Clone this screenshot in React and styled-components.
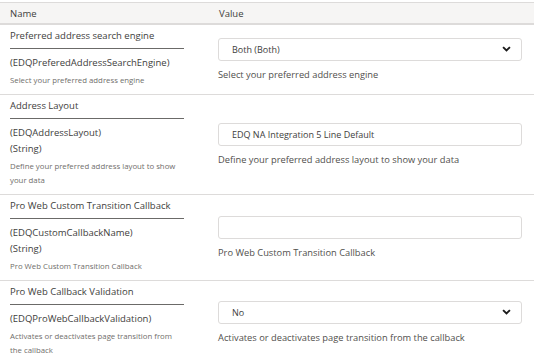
import React from "react";
import styled, { createGlobalStyle } from "styled-components";

const GlobalStyle = createGlobalStyle`
  body {
    margin: 0;
    background: #ffffff;
    font-family: "Open Sans", "Liberation Sans", sans-serif;
    color: #3e3e3c;
  }
`;

const settings = [
  {
    label: "Preferred address search engine",
    apiName: "(EDQPreferedAddressSearchEngine)",
    type: null,
    help: "Select your preferred address engine",
    kind: "select",
    value: "Both (Both)",
  },
  {
    label: "Address Layout",
    apiName: "(EDQAddressLayout)",
    type: "(String)",
    help: "Define your preferred address layout to show your data",
    kind: "input",
    value: "EDQ NA Integration 5 Line Default",
  },
  {
    label: "Pro Web Custom Transition Callback",
    apiName: "(EDQCustomCallbackName)",
    type: "(String)",
    help: "Pro Web Custom Transition Callback",
    kind: "input",
    value: "",
  },
  {
    label: "Pro Web Callback Validation",
    apiName: "(EDQProWebCallbackValidation)",
    type: null,
    help: "Activates or deactivates page transition from the callback",
    kind: "select",
    value: "No",
  },
];

const Chevron = () => (
  <svg width="9" height="6" viewBox="0 0 10 7">
    <path d="M1 1.3 L5 5.2 L9 1.3" fill="none" stroke="#1b1b1b" strokeWidth="2.2" />
  </svg>
);

const App = () => {
  return (
    <>
      <GlobalStyle />
      <Table>
        <HeaderRow>
          <HeadCell>Name</HeadCell>
          <HeadCell>Value</HeadCell>
        </HeaderRow>
        {settings.map((s) => (
          <Row key={s.apiName}>
            <NameCell>
              <Label>{s.label}</Label>
              <Rule />
              <ApiName>{s.apiName}</ApiName>
              {s.type && <ApiName>{s.type}</ApiName>}
              <SmallHelp>{s.help}</SmallHelp>
            </NameCell>
            <ValueCell>
              <Field>
                <span>{s.value}</span>
                {s.kind === "select" && <Chevron />}
              </Field>
              <Help>{s.help}</Help>
            </ValueCell>
          </Row>
        ))}
      </Table>
    </>
  );
};

export default App;

const Table = styled.div`
  width: 534px;
  margin-top: 2px;
  border-top: 1px solid #dddbda;
  border-bottom: 2px solid #e5e5e5;
`;

const HeaderRow = styled.div`
  display: grid;
  grid-template-columns: 209px 1fr;
  height: 20px;
  align-items: center;
  background: #f6f5f4;
  border-bottom: 2px solid #dddbda;
`;

const HeadCell = styled.div`
  padding-left: 10px;
  font-size: 9.5px;
  color: #3e3e3c;
`;

const Row = styled.div`
  display: grid;
  grid-template-columns: 209px 1fr;
  border-bottom: 1px solid #dddbda;
  &:last-child {
    border-bottom: none;
  }
`;

const NameCell = styled.div`
  padding: 4px 0 7px 10px;
  display: flex;
  flex-direction: column;
`;

const Label = styled.div`
  font-size: 9.5px;
  line-height: 14px;
  padding-bottom: 5px;
`;

const Rule = styled.div`
  width: 174px;
  border-top: 1px solid #6b6a68;
  margin-bottom: 6px;
`;

const ApiName = styled.div`
  font-size: 9.5px;
  line-height: 16px;
`;

const SmallHelp = styled.div`
  font-size: 7.8px;
  line-height: 14px;
  color: #706e6b;
  width: 175px;
  margin-top: 2px;
`;

const ValueCell = styled.div`
  padding: 0 12px 0 9px;
  display: flex;
  flex-direction: column;
  justify-content: center;
  gap: 7px;
`;

const Field = styled.div`
  height: 23px;
  box-sizing: border-box;
  border: 1px solid #dddbda;
  border-radius: 3px;
  display: flex;
  align-items: center;
  justify-content: space-between;
  padding: 0 10px 0 13px;
  font-size: 9px;
  color: #3e3e3c;
`;

const Help = styled.div`
  font-size: 9.3px;
  color: #514f4d;
  line-height: 14px;
`;
